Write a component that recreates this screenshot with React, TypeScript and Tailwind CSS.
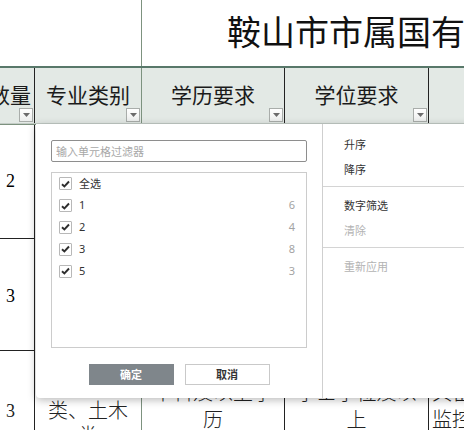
import type { ReactNode } from 'react';

const cjk = "font-['Noto_Sans_CJK_SC','Noto_Sans',sans-serif]";

function DropButton() {
  return (
    <span className="absolute bottom-[1px] right-[1px] flex h-[14px] w-[14px] items-center justify-center border border-[#a9adaa] bg-[linear-gradient(180deg,#ffffff,#eceeed)]">
      <svg width="7" height="4" viewBox="0 0 7 4" aria-hidden="true">
        <polygon points="0,0 7,0 3.5,4" fill="#6b6b6b" />
      </svg>
    </span>
  );
}

function HeaderCell({ label, width, border, align = 'center' }: { label: string; width: string; border: string; align?: 'center' | 'end' }) {
  return (
    <div
      className={`relative flex shrink-0 items-center overflow-hidden whitespace-nowrap border-r pb-[2px] text-[21px] text-[#1b1b1b] ${width} ${border} ${
        align === 'end' ? 'justify-end pr-[3px]' : 'justify-center'
      }`}
    >
      {label}
      <DropButton />
    </div>
  );
}

function Check() {
  return (
    <span className="flex h-[13px] w-[13px] shrink-0 items-center justify-center rounded-[1px] border border-[#b8b8b8] bg-white">
      <svg width="9" height="8" viewBox="0 0 9 8" aria-hidden="true">
        <path d="M1 4.2 L3.4 6.5 L8 1.5" fill="none" stroke="#2e2e2e" strokeWidth="1.9" />
      </svg>
    </span>
  );
}

const items = [
  { label: '全选', count: '' },
  { label: '1', count: '6' },
  { label: '2', count: '4' },
  { label: '3', count: '8' },
  { label: '5', count: '3' },
];

function MenuItem({ children, disabled }: { children: ReactNode; disabled?: boolean }) {
  return (
    <div className={`flex h-[25px] items-center pl-[21px] ${disabled ? 'text-[#b3b3b3]' : 'text-[#333333]'}`}>{children}</div>
  );
}

export default function App() {
  return (
    <div className={`relative h-[430px] w-[464px] overflow-hidden bg-white ${cjk}`}>
      {/* title row */}
      <div className="flex h-[68px] border-b-2 border-[#58786a]">
        <div className="w-[142px] shrink-0 border-r border-[#7d927f]" />
        <div className="flex flex-1 items-center whitespace-nowrap pb-[5px] pl-[85px] text-[34px] text-[#111111]">
          鞍山市市属国有企业公开招聘
        </div>
      </div>

      {/* header row */}
      <div className="flex h-[56px] border-b border-[#c4cdc7] bg-[#e3e9e5]">
        <HeaderCell label="数量" width="w-[35px]" border="border-[#222222]" align="end" />
        <HeaderCell label="专业类别" width="w-[107px]" border="border-[#7d927f]" />
        <HeaderCell label="学历要求" width="w-[143px]" border="border-[#222222]" />
        <HeaderCell label="学位要求" width="w-[144px]" border="border-[#222222]" />
        <div className="flex-1" />
      </div>

      {/* data rows */}
      <div className="flex h-[115px] border-t border-[#7d927f]">
        <div className="flex w-[35px] shrink-0 items-center border-r border-b border-[#222222] pl-[6px] font-['Liberation_Serif',serif] text-[18px]">2</div>
      </div>
      <div className="flex h-[112px]">
        <div className="flex w-[35px] shrink-0 items-center border-r border-b border-[#222222] pl-[6px] pt-[4px] font-['Liberation_Serif',serif] text-[18px]">3</div>
      </div>
      <div className="flex h-[120px] text-[20px] text-[#222222]">
        <div className="flex w-[35px] shrink-0 items-center border-r border-[#222222] pl-[6px] font-['Liberation_Serif',serif] text-[18px]">3</div>
        <div className="w-[107px] shrink-0 border-r border-[#7d927f] pt-[46px] text-center font-light leading-[25px]">
          <div>类、土木</div>
          <div>类</div>
        </div>
        <div className="w-[143px] shrink-0 border-r border-[#222222] pt-[27px] text-center font-light leading-[27px]">
          <div>本科及以上学</div>
          <div>历</div>
        </div>
        <div className="w-[144px] shrink-0 border-r border-[#222222] pt-[27px] text-center font-light leading-[27px]">
          <div>学士学位及以</div>
          <div>上</div>
        </div>
        <div className="flex-1 whitespace-nowrap pl-[3px] pt-[27px] font-light leading-[27px]">
          <div>具备网络</div>
          <div>监控运维</div>
        </div>
      </div>

      {/* filter popup */}
      <div className="absolute left-[36px] top-[124px] flex h-[274px] w-[450px] rounded-bl-[4px] bg-white text-[11px] shadow-[0_2px_8px_rgba(0,0,0,0.28)]">
        <div className="flex w-[287px] shrink-0 flex-col border-r border-[#cfcfcf] px-[15px] pt-[16px]">
          <input
            readOnly
            placeholder="输入单元格过滤器"
            className="h-[22px] w-full rounded-[2px] border border-[#8e8e8e] px-[4px] text-[11px] outline-none placeholder:text-[#a8a8a8]"
          />
          <div className="mt-[10px] h-[176px] border border-[#cccccc] pl-[7px] pr-[11px]">
            {items.map((it) => (
              <div key={it.label} className="flex h-[21.8px] items-center">
                <Check />
                <span className="ml-[7px] flex-1 font-['Noto_Sans','Noto_Sans_CJK_SC',sans-serif] text-[#333333]">{it.label}</span>
                <span className="font-['Noto_Sans',sans-serif] text-[#a3a3a3]">{it.count}</span>
              </div>
            ))}
          </div>
          <div className="mt-[16px] flex justify-center gap-[11px]">
            <button className="h-[21px] w-[85px] bg-[#7f868b] font-bold text-white">确定</button>
            <button className="h-[21px] w-[85px] border border-[#c9c9c9] bg-white font-bold text-[#333333]">取消</button>
          </div>
        </div>
        <div className="flex-1 pt-[8px]">
          <MenuItem>升序</MenuItem>
          <MenuItem>降序</MenuItem>
          <div className="mb-[6px] mt-[4px] border-t border-[#d4d4d4]" />
          <MenuItem>数字筛选</MenuItem>
          <MenuItem disabled>清除</MenuItem>
          <div className="mb-[6px] mt-[4px] border-t border-[#d4d4d4]" />
          <MenuItem disabled>重新应用</MenuItem>
        </div>
      </div>
    </div>
  );
}
